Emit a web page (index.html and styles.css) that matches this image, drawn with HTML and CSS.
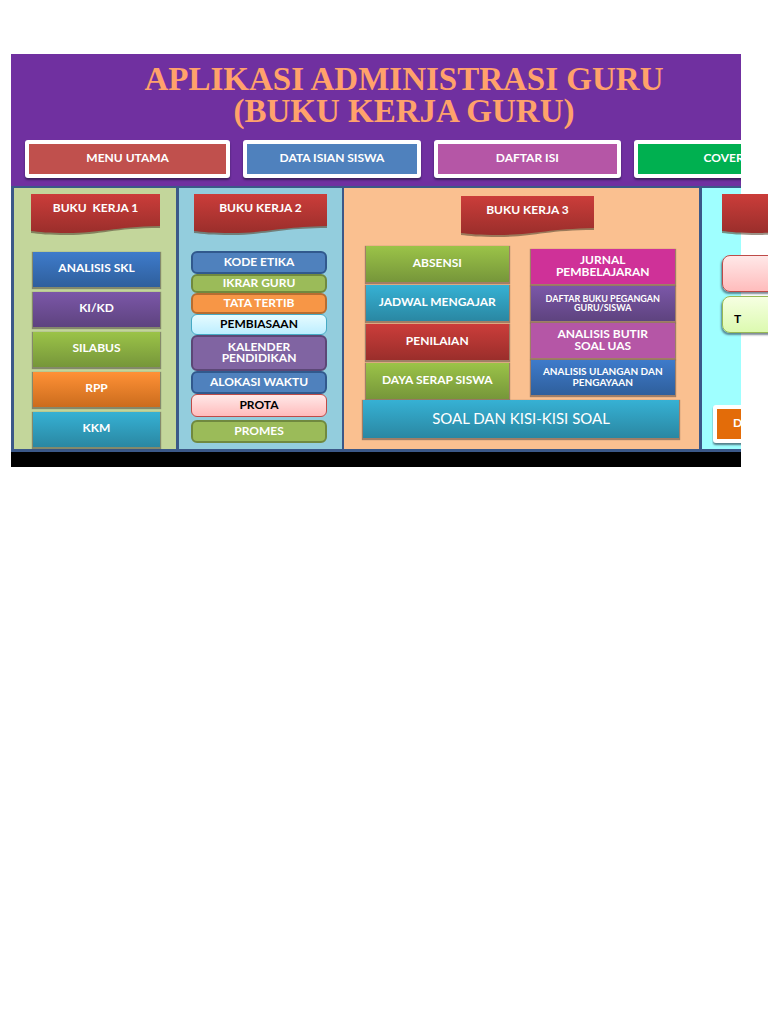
FILE: index.html
```html
<!DOCTYPE html>
<html lang="id">
<head>
<meta charset="utf-8">
<meta name="viewport" content="width=device-width, initial-scale=1">
<title>Aplikasi Administrasi Guru</title>
<link rel="stylesheet" href="styles.css">
</head>
<body>
<svg class="defs" aria-hidden="true">
  <defs>
    <linearGradient id="red" x1="0" y1="0" x2="0" y2="1">
      <stop offset="0" stop-color="#cb3d3a"/>
      <stop offset="1" stop-color="#9a2e2b"/>
    </linearGradient>
    <symbol id="flag" viewBox="0 0 100 42" preserveAspectRatio="none">
      <path d="M0 2H100V34C64 34 54 41 28 41C14 41 6 40 0 39Z" fill="#5a4a35" opacity=".6"/>
      <path d="M0 0H100V32C64 33 54 39 28 39C14 39 6 38 0 37Z" fill="url(#red)"/>
    </symbol>
  </defs>
</svg>
<main class="board">
  <header class="top">
    <h1 class="title">APLIKASI ADMINISTRASI GURU<br>(BUKU KERJA GURU)</h1>
    <nav class="nav">
      <button class="tab brick">MENU UTAMA</button>
      <button class="tab azure">DATA ISIAN SISWA</button>
      <button class="tab orchid">DAFTAR ISI</button>
      <button class="tab emerald">COVER</button>
    </nav>
  </header>
  <div class="panels">
    <section class="panel one">
      <h2 class="ribbon"><svg class="flag" aria-hidden="true"><use href="#flag"/></svg><span class="name">BUKU&nbsp; KERJA 1</span></h2>
      <div class="list">
        <button class="box blue">ANALISIS SKL</button>
        <button class="box purple">KI/KD</button>
        <button class="box green">SILABUS</button>
        <button class="box orange">RPP</button>
        <button class="box teal">KKM</button>
      </div>
    </section>
    <section class="panel two">
      <h2 class="ribbon"><svg class="flag" aria-hidden="true"><use href="#flag"/></svg><span class="name">BUKU KERJA 2</span></h2>
      <div class="pills">
        <button class="pill azure">KODE ETIKA</button>
        <button class="pill leaf">IKRAR GURU</button>
        <button class="pill tangerine">TATA TERTIB</button>
        <button class="pill ice">PEMBIASAAN</button>
        <button class="pill violet tall">KALENDER<br>PENDIDIKAN</button>
        <button class="pill azure">ALOKASI WAKTU</button>
        <button class="pill pink">PROTA</button>
        <button class="pill leaf last">PROMES</button>
      </div>
    </section>
    <section class="panel three">
      <h2 class="ribbon"><svg class="flag" aria-hidden="true"><use href="#flag"/></svg><span class="name">BUKU KERJA 3</span></h2>
      <div class="pair">
        <div class="stack">
          <button class="box green">ABSENSI</button>
          <button class="box teal">JADWAL MENGAJAR</button>
          <button class="box red">PENILAIAN</button>
          <button class="box green">DAYA SERAP SISWA</button>
        </div>
        <div class="stack right">
          <button class="box magenta">JURNAL<br>PEMBELAJARAN</button>
          <button class="box purple small">DAFTAR BUKU PEGANGAN<br>GURU/SISWA</button>
          <button class="box orchid">ANALISIS BUTIR<br>SOAL UAS</button>
          <button class="box blue medium">ANALISIS ULANGAN DAN<br>PENGAYAAN</button>
        </div>
      </div>
      <button class="box teal wide">SOAL DAN KISI-KISI SOAL</button>
    </section>
    <section class="panel four">
      <h2 class="ribbon" aria-label="Buku kerja"><svg class="flag" aria-hidden="true"><use href="#flag"/></svg></h2>
      <button class="card pink" aria-label="Menu"></button>
      <button class="card lime"><span class="cut">T</span></button>
      <div class="corner"><button class="tab amber">D</button></div>
    </section>
  </div>
</main>
</body>
</html>
```
FILE: styles.css
```css
* { box-sizing: border-box; }
html { overflow-x: hidden; }
body {
  margin: 0;
  background: #fff;
  font-family: Lato, "Open Sans", sans-serif;
  overflow-x: hidden;
}
.defs { position: absolute; width: 0; height: 0; }
.board {
  margin: 54px 27px 0 11px;
  border-bottom: 15px solid #000;
}
button {
  font: 700 12px/12px Lato, "Open Sans", sans-serif;
  color: #fff;
  border: 0;
  padding: 0;
  cursor: pointer;
  white-space: nowrap;
}
.top {
  background: #7030a0;
  padding: 9px 0 8px;
  overflow: hidden;
}
.title {
  margin: 0 0 13px;
  padding-left: 56px;
  text-align: center;
  font: bold 33px/32px "Liberation Serif", serif;
  color: #ffa26b;
}
.nav {
  display: grid;
  grid-template-columns: 206fr 178fr 188fr 188fr;
  gap: 13px;
  width: 111%;
  padding-left: 14px;
}
.tab {
  height: 38px;
  padding-bottom: 2px;
  border: 4px solid #fff;
  border-radius: 3px;
  box-shadow: 0 2px 2px rgba(20, 20, 40, .55);
}
.brick { background: #c0504d; }
.azure { background: #4f81bd; }
.orchid { background: #b556a6; }
.emerald { background: #00b050; padding-right: 8px; }
.amber { background: #e36c09; }

.panels {
  display: grid;
  grid-template-columns: 165fr 166fr 357fr 42fr;
}
.panel {
  min-width: 0;
  min-height: 266px;
  border: solid #3b5888;
  border-width: 2px 0 3px 3px;
  padding-top: 6px;
}
.one { background: #c3d69b; padding-left: 17px; padding-right: 16px; }
.two { background: #93cddd; padding-left: 12px; padding-right: 15px; }
.three { background: #fac090; padding-left: 19px; padding-right: 20px; border-left-width: 2px; }
.four { background: #9fffff; padding-left: 20px; }

.ribbon {
  position: relative;
  height: 42px;
  margin: 0 0 16px;
  font-size: 12px;
  line-height: 28px;
  font-weight: 700;
  text-align: center;
  color: #fff;
}
.two .ribbon { margin-left: 3px; margin-bottom: 15px; }
.three .ribbon { width: 133px; margin: 2px 0 8px 31%; }
.four .ribbon { width: 130px; margin-bottom: 19px; }
.flag { position: absolute; left: 0; top: 0; width: 100%; height: 100%; }
.name { position: relative; }

.list { display: grid; gap: 5px; padding-left: 2px; }
.box {
  height: 35px;
  box-shadow: 0 1px 1px 1px rgba(70, 60, 60, .5);
}
.list .box { padding-bottom: 4px; }
.blue { background: linear-gradient(#3e7bcb, #2f5f9c); }
.purple { background: linear-gradient(#7b57a8, #5e437f); }
.green { background: linear-gradient(#9bc348, #76963a); }
.orange { background: linear-gradient(#ff9136, #cb6c1d); }
.teal { background: linear-gradient(#36b1d4, #2a87a2); }
.red { background: linear-gradient(#cb3d3a, #9a2e2b); }
.magenta { background: #cf3198; }

.pills { display: grid; }
.pill {
  height: 21px;
  padding-bottom: 2px;
  border: 2px solid;
  border-radius: 6px;
}
.pill.azure { border-color: #31598d; height: 23px; }
.leaf { background: #9bbb59; border-color: #70893f; height: 19px; }
.tangerine { background: #f79646; border-color: #b66d31; }
.ice { background: linear-gradient(#e6fbff, #bdeeff); border: 1px solid #46aac5; color: #000; }
.violet { background: #8064a2; border-color: #5c4776; }
.pill.tall { height: 36px; line-height: 11px; }
.pink { background: linear-gradient(#ffe8e8, #ffbcbc); border: 1px solid #be4b48; color: #000; }
.pill.pink { height: 23px; }
.pill.last { margin-top: 3px; height: 23px; }

.pair {
  display: grid;
  grid-template-columns: 143fr 145fr;
  gap: 22px;
  padding-left: 3px;
  padding-right: 4px;
}
.stack { display: grid; gap: 3px; align-content: start; }
.stack .box { height: 36px; padding-bottom: 2px; }
.right { padding-top: 3px; gap: 2px; }
.stack.right .box { height: 35px; }
.three .small { font-size: 9px; line-height: 9px; }
.three .medium { font-size: 10px; line-height: 11px; }
.three .wide {
  width: 100%;
  height: 38px;
  margin-top: 1px;
  padding-bottom: 3px;
  font-size: 15px;
  font-weight: 400;
}

.card {
  display: block;
  width: 130px;
  height: 37px;
  margin-bottom: 4px;
  border-radius: 8px;
  box-shadow: -1px 2px 2px rgba(40, 60, 80, .6);
}
.lime { background: linear-gradient(#f6ffe2, #dcfab0); border: 1px solid #98b954; color: #000; text-align: left; }
.cut { display: block; width: 19px; padding: 8px 0 0 11px; overflow: hidden; }
.corner { margin: 72px 0 0 -10px; overflow: hidden; padding: 0 0 4px 1px; }
.corner .tab { width: 140px; text-align: left; padding-left: 16px; }
```
